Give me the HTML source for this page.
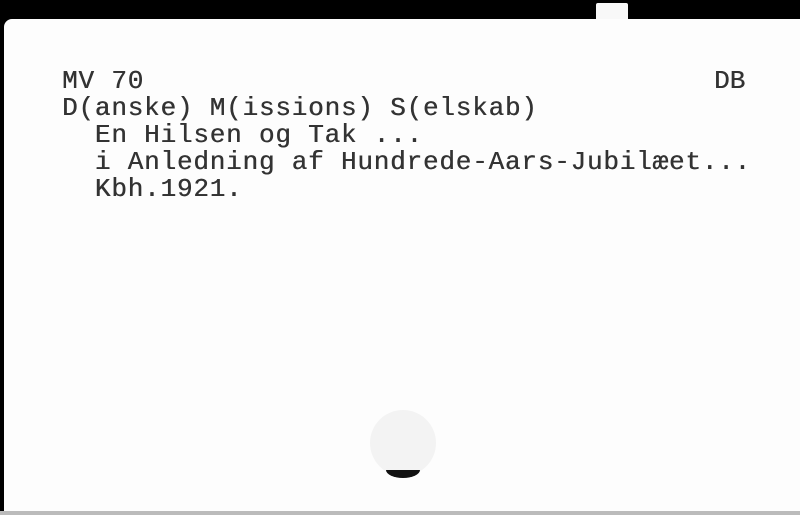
<!DOCTYPE html>
<html><head><style>
html,body{margin:0;padding:0}
body{width:800px;height:515px;background:#000;position:relative;overflow:hidden}
.card{position:absolute;left:4px;top:19px;width:796px;height:494px;background:#fdfdfd;border-top-left-radius:8px}
.tab{position:absolute;left:596px;top:3px;width:32px;height:20px;background:#f8f8f8;border-radius:2px 2px 0 0}
.bot{position:absolute;left:0;top:511px;width:800px;height:4px;background:#bbb}
.t{position:absolute;left:62px;top:68px;font-family:"Liberation Mono",monospace;font-size:26px;letter-spacing:0.8px;line-height:27px;color:#333;white-space:pre;text-shadow:0.4px 0 0 #333}
.db{position:absolute;left:714px;top:68px;font-family:"Liberation Mono",monospace;font-size:26px;line-height:27px;color:#333;letter-spacing:0px;text-shadow:0.4px 0 0 #333}
.blob{position:absolute;left:370px;top:410px;width:66px;height:66px;border-radius:50%;background:#f3f3f3}
.cres{position:absolute;left:386px;top:470px;width:34px;height:8px;background:#111;border-radius:0 0 17px 17px/0 0 8px 8px}
</style></head><body>
<div class="tab"></div>
<div class="card"></div>
<div class="bot"></div>
<div class="t">MV 70
D(anske) M(issions) S(elskab)
  En Hilsen og Tak ...
  i Anledning af Hundrede-Aars-Jubilæet...
  Kbh.1921.</div>
<div class="db">DB</div>
<div class="blob"></div>
<div class="cres"></div>
</body></html>
